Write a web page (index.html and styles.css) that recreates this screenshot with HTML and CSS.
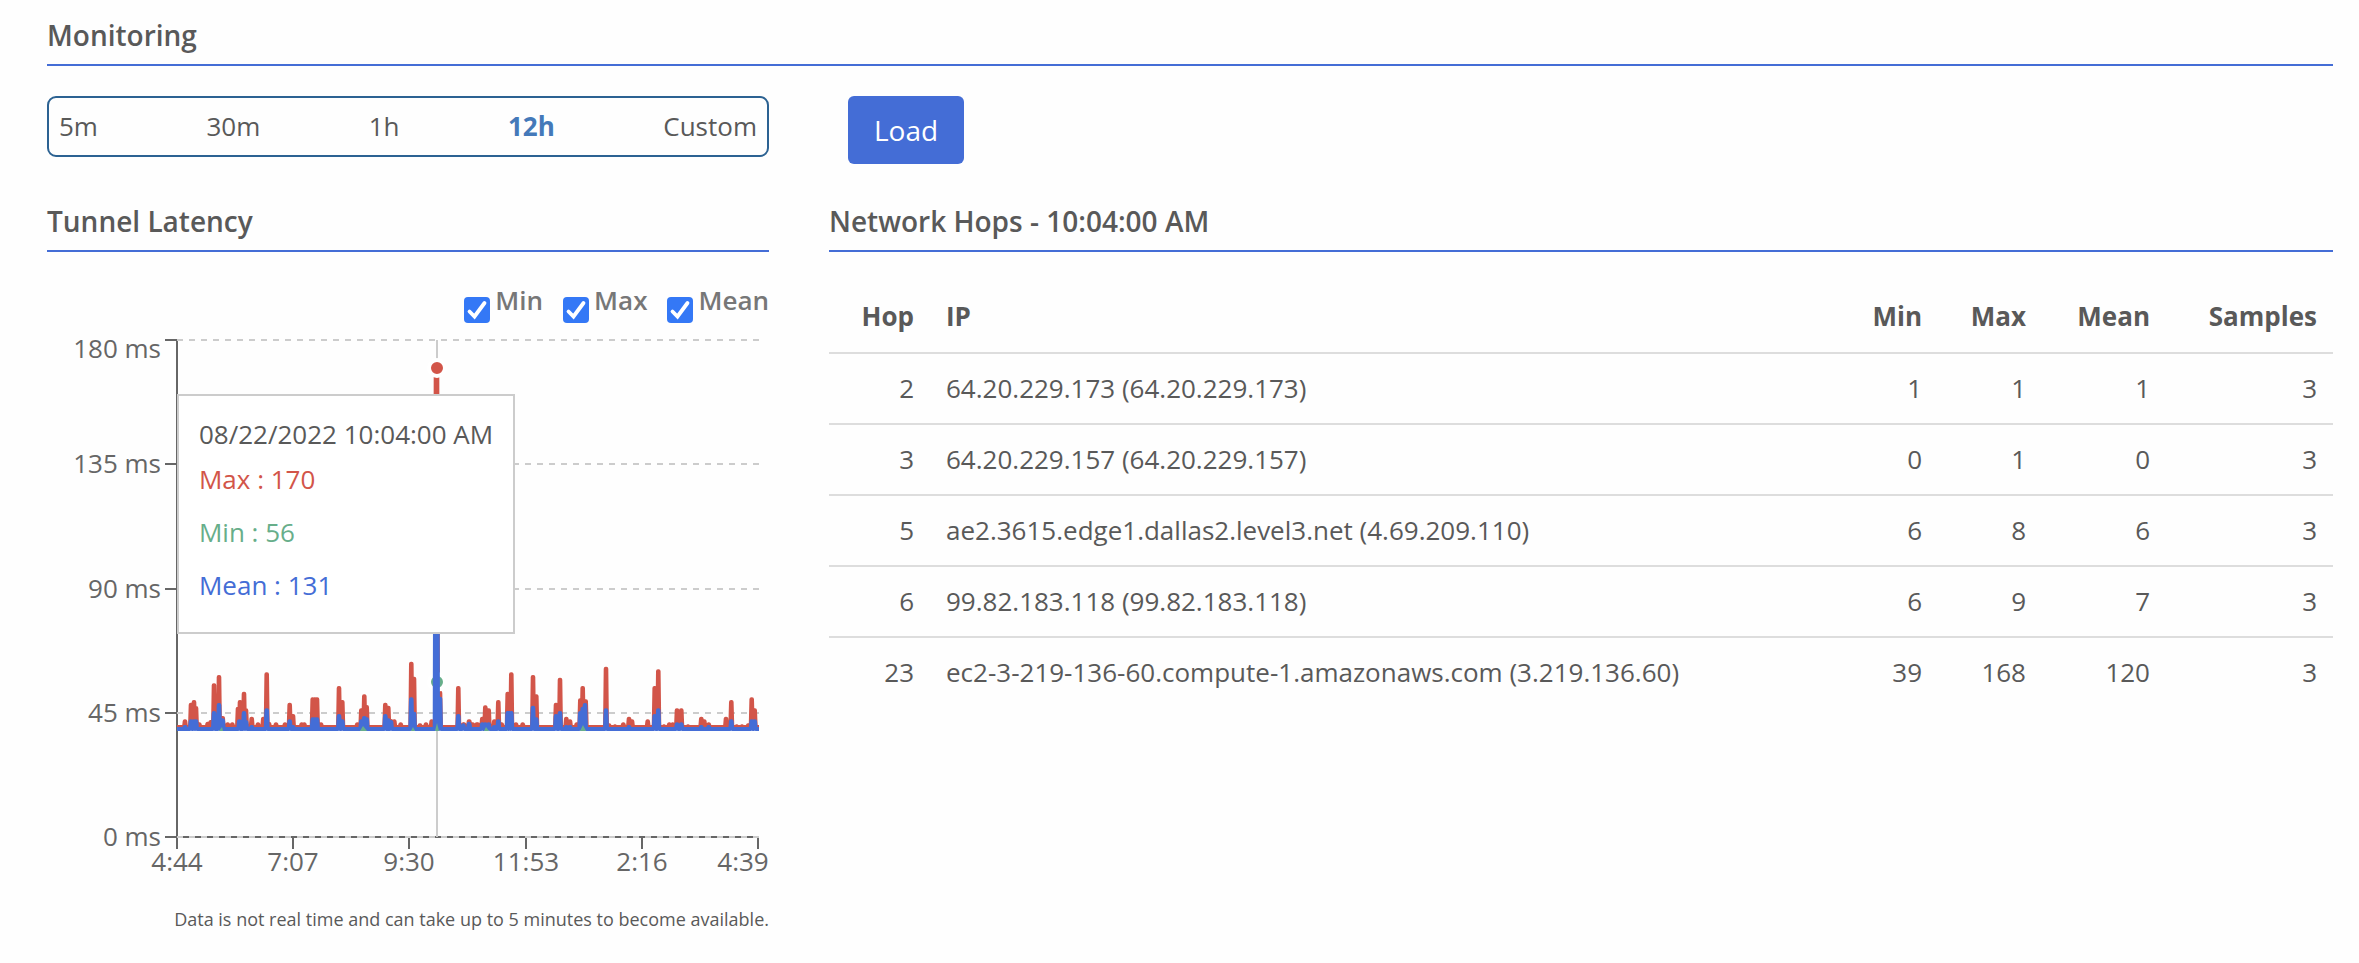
FILE: index.html
```html
<!DOCTYPE html>
<html lang="en">
<head>
<meta charset="utf-8">
<title>Monitoring</title>
<link rel="stylesheet" href="styles.css">
</head>
<body>
<main class="page">
  <h2 class="heading">Monitoring</h2>
  <div class="columns controls">
    <div class="range" role="group" aria-label="Time range">
      <button type="button" class="range-option">5m</button>
      <button type="button" class="range-option">30m</button>
      <button type="button" class="range-option">1h</button>
      <button type="button" class="range-option active" aria-pressed="true">12h</button>
      <button type="button" class="range-option">Custom</button>
    </div>
    <div class="actions"><button type="button" class="load">Load</button></div>
  </div>
  <div class="columns">
    <section>
      <h2 class="heading">Tunnel Latency</h2>
      <div class="legend">
        <div class="legend-item"><input type="checkbox" id="show-min" class="check" checked><label for="show-min">Min</label></div>
        <div class="legend-item"><input type="checkbox" id="show-max" class="check" checked><label for="show-max">Max</label></div>
        <div class="legend-item"><input type="checkbox" id="show-mean" class="check" checked><label for="show-mean">Mean</label></div>
      </div>
      <div class="chart">
        <svg class="plot" viewBox="0 0 722 560" role="img" aria-label="Tunnel latency over time">
          <g transform="translate(130 14)">
            <path class="axis" d="M-12 0H0M-12 124H0M-12 249H0M-12 373H0M-12 497H582M0 -1V509M116 497V509M232 497V509M349 497V509M465 497V509M581 497V509"/>
            <path class="grid" d="M0 0H582M0 124H582M0 249H582M0 373H582M0 497H582"/>
            <path class="cursor" d="M260 0V497"/>
            <path class="series max" id="series-max"/>
            <circle class="dot dot-min" cx="260" cy="342" r="8"/>
            <path class="series mean" id="series-mean"/>
            <path class="low" d="M42 391l3-4 1 4zM183 391l3-5 4 5zM234 391l2-4 2 4zM258 391l2-8 2 8zM307 391l2-4 3 4zM403 391l3-6 3 6z"/>
            <circle class="dot dot-max" cx="260" cy="28" r="8"/>
            <g class="label label-y">
              <text x="-16" y="18">180 ms</text>
              <text x="-16" y="133">135 ms</text>
              <text x="-16" y="258">90 ms</text>
              <text x="-16" y="382">45 ms</text>
              <text x="-16" y="506">0 ms</text>
            </g>
            <g class="label label-x">
              <text x="0" y="531">4:44</text>
              <text x="116" y="531">7:07</text>
              <text x="232" y="531">9:30</text>
              <text x="349" y="531">11:53</text>
              <text x="465" y="531">2:16</text>
              <text x="566" y="531">4:39</text>
            </g>
          </g>
        </svg>
        <div class="tooltip">
          <p class="tip-time">08/22/2022 10:04:00 AM</p>
          <ul class="tip-list">
            <li class="tip-max">Max : 170</li>
            <li class="tip-min">Min : 56</li>
            <li class="tip-mean">Mean : 131</li>
          </ul>
        </div>
      </div>
      <p class="note">Data is not real time and can take up to 5 minutes to become available.</p>
    </section>
    <section>
      <h2 class="heading">Network Hops - 10:04:00 AM</h2>
      <table class="hops">
        <thead>
          <tr><th class="c-hop">Hop</th><th class="c-ip">IP</th><th class="c-min">Min</th><th class="c-max">Max</th><th class="c-mean">Mean</th><th class="c-samples">Samples</th></tr>
        </thead>
        <tbody>
          <tr><td>2</td><td class="c-ip">64.20.229.173 (64.20.229.173)</td><td>1</td><td>1</td><td>1</td><td>3</td></tr>
          <tr><td>3</td><td class="c-ip">64.20.229.157 (64.20.229.157)</td><td>0</td><td>1</td><td>0</td><td>3</td></tr>
          <tr><td>5</td><td class="c-ip">ae2.3615.edge1.dallas2.level3.net (4.69.209.110)</td><td>6</td><td>8</td><td>6</td><td>3</td></tr>
          <tr><td>6</td><td class="c-ip">99.82.183.118 (99.82.183.118)</td><td>6</td><td>9</td><td>7</td><td>3</td></tr>
          <tr><td>23</td><td class="c-ip">ec2-3-219-136-60.compute-1.amazonaws.com (3.219.136.60)</td><td>39</td><td>168</td><td>120</td><td>3</td></tr>
        </tbody>
      </table>
    </section>
  </div>
</main>
<script src="chart.js"></script>
</body>
</html>
```

FILE: styles.css
```css
* { box-sizing: border-box; }
body {
  margin: 0;
  background: #fefefe;
  color: #595959;
  font-family: "Open Sans", "Noto Sans", sans-serif;
  font-size: 26px;
  line-height: 37px;
}
button { font: inherit; color: inherit; cursor: pointer; }
.page { padding: 16px 26px 20px 47px; }
.heading {
  margin: 0;
  padding-bottom: 10px;
  border-bottom: 2px solid #446dd6;
  font-size: 28px;
  line-height: 38px;
  font-weight: 600;
}
.columns {
  display: grid;
  grid-template-columns: 722fr 1504fr;
  column-gap: 60px;
  align-items: start;
}
.controls { margin: 30px 0 38px; }
.range {
  display: flex;
  justify-content: space-between;
  padding: 10px;
  border: 2px solid #2c6292;
  border-radius: 9px;
}
.range-option { padding: 0; border: 0; background: none; }
.range-option.active { color: #4479b9; font-weight: 700; }
.actions { padding-left: 19px; }
.load {
  display: block;
  padding: 15px 26px;
  border: 0;
  border-radius: 6px;
  background: #446dd6;
  color: #fff;
  font-size: 28px;
  line-height: 38px;
}
.legend {
  display: flex;
  justify-content: flex-end;
  gap: 20px;
  height: 44px;
  margin-top: 30px;
  color: #777;
  font-weight: 600;
}
.legend-item { display: flex; gap: 5px; align-items: flex-start; }
.check {
  appearance: none;
  width: 26px;
  height: 26px;
  margin: 15px 0 0;
  border-radius: 4px;
  background: #3478f6;
}
.check:checked {
  background: #3478f6 url("data:image/svg+xml,%3Csvg xmlns='http://www.w3.org/2000/svg' viewBox='0 0 26 26'%3E%3Cpath d='M5.500 14.500l5 5L20.500 6' fill='none' stroke='white' stroke-width='3.800' stroke-linecap='round' stroke-linejoin='miter'/%3E%3C/svg%3E") center / contain no-repeat;
}
.chart { position: relative; }
.plot { display: block; width: 100%; overflow: visible; }
.axis { fill: none; stroke: #666; stroke-width: 2; }
.grid { fill: none; stroke: #ccc; stroke-width: 2; stroke-dasharray: 6 6; }
.cursor { stroke: #ccc; stroke-width: 2; }
.series { fill: none; stroke-width: 4; stroke-linejoin: round; }
.max { stroke: #d25549; }
.mean { stroke: #446dd6; }
.low { fill: #67ae8a; }
.dot { stroke: #fff; stroke-width: 4; }
.dot-max { fill: #d25549; }
.dot-min { fill: #67ae8a; }
.label { fill: #666; font-size: 26px; }
.label-y { text-anchor: end; }
.label-x { text-anchor: middle; }
.tooltip {
  position: absolute;
  top: 68px;
  left: 18%;
  padding: 20px;
  border: 2px solid #ccc;
  background: #fff;
  white-space: nowrap;
}
.tip-time { margin: 0; }
.tip-list { margin: 0; padding: 0; list-style: none; }
.tip-list li { padding: 8px 0; }
.tip-max { color: #d25549; }
.tip-min { color: #67ae8a; }
.tip-mean { color: #446dd6; }
.note { margin: 20px 0 0; font-size: 18px; line-height: 27px; text-align: right; }
.hops {
  width: 100%;
  margin-top: 31px;
  border-collapse: separate;
  border-spacing: 0;
  table-layout: fixed;
}
.hops th, .hops td { padding: 16px; text-align: right; }
.hops td { border-top: 2px solid #ddd; }
.hops th { padding: 15px 16px 17px; font-weight: 700; }
.hops .c-ip { text-align: left; }
.c-hop { width: 101px; }
.c-min { width: 100px; }
.c-max { width: 104px; }
.c-mean { width: 124px; }
.c-samples { width: 167px; }
```

FILE: chart.js
```js
// Peaks are [time, level] pairs on a grid of a third of a pixel, in two six-hour blocks.
const maxPeaks = [
  { offset: -51, peaks: [[75,238],[93,188],[102,180],[108,198],[118,247],[143,245],[152,240],[162,130],[177,105],[188,228],[203,247],[217,247],[234,200],[240,180],[252,155],[258,205],[275,230],[294,247],[310,230],[320,97],[327,245],[348,247],[375,247],[389,188],[399,222],[425,247],[433,247],[458,172],[464,172],[471,172],[483,247],[537,138],[547,180],[592,247],[604,205],[613,163],[620,195],[676,188],[685,197],[693,237],[703,238],[722,247],[754,65],[762,110],[780,250],[798,247],[815,238],[828,-820],[831,-820],[840,152],[895,138],[910,247],[927,238],[950,247]] },
  { offset: 849, peaks: [[12,247],[28,238],[38,247],[53,247],[67,230],[76,196],[86,205],[103,238],[115,180],[125,247],[143,155],[154,97],[168,247],[188,247],[219,105],[229,163],[288,188],[300,113],[319,230],[330,238],[350,247],[361,175],[368,138],[377,178],[438,80],[447,250],[465,253],[490,247],[507,230],[516,238],[563,238],[584,138],[595,88],[612,253],[628,247],[638,247],[651,205],[664,205],[684,253],[724,230],[733,238],[746,247],[798,230],[814,180],[830,253],[846,253],[865,250],[875,172],[884,205]] }
];
const meanPeaks = [
  { offset: -51, peaks: [[75,255],[93,238],[102,238],[108,238],[162,213],[177,189],[188,235],[238,238],[252,213],[258,240],[275,255],[320,205],[389,238],[399,255],[458,232],[464,232],[471,232],[537,222],[547,238],[604,238],[613,228],[620,232],[676,222],[685,235],[693,240],[754,172],[762,215],[827,-496],[831,-496],[840,170],[895,222],[910,250],[927,245]] },
  { offset: 849, peaks: [[28,247],[67,247],[76,247],[86,247],[103,255],[115,238],[143,213],[148,213],[154,213],[219,197],[229,232],[288,222],[300,213],[319,255],[330,255],[361,213],[368,200],[375,189],[438,205],[507,255],[584,222],[595,205],[651,247],[664,247],[724,255],[746,255],[814,238],[875,238],[884,238]] }
];

function linePath(blocks, base) {
  let d = `M0 ${base}`;
  for (const { offset, peaks } of blocks) {
    for (const [time, level] of peaks) {
      const x = (time + offset) / 3;
      const y = 302 + level / 3;
      d += `L${(x - 1).toFixed(1)} ${base}L${(x - 0.3).toFixed(1)} ${y.toFixed(1)}H${(x + 0.3).toFixed(1)}L${(x + 1).toFixed(1)} ${base}`;
    }
  }
  return `${d}L582 ${base}`;
}

document.getElementById("series-max").setAttribute("d", linePath(maxPeaks, 387));
document.getElementById("series-mean").setAttribute("d", linePath(meanPeaks, 389));
```
